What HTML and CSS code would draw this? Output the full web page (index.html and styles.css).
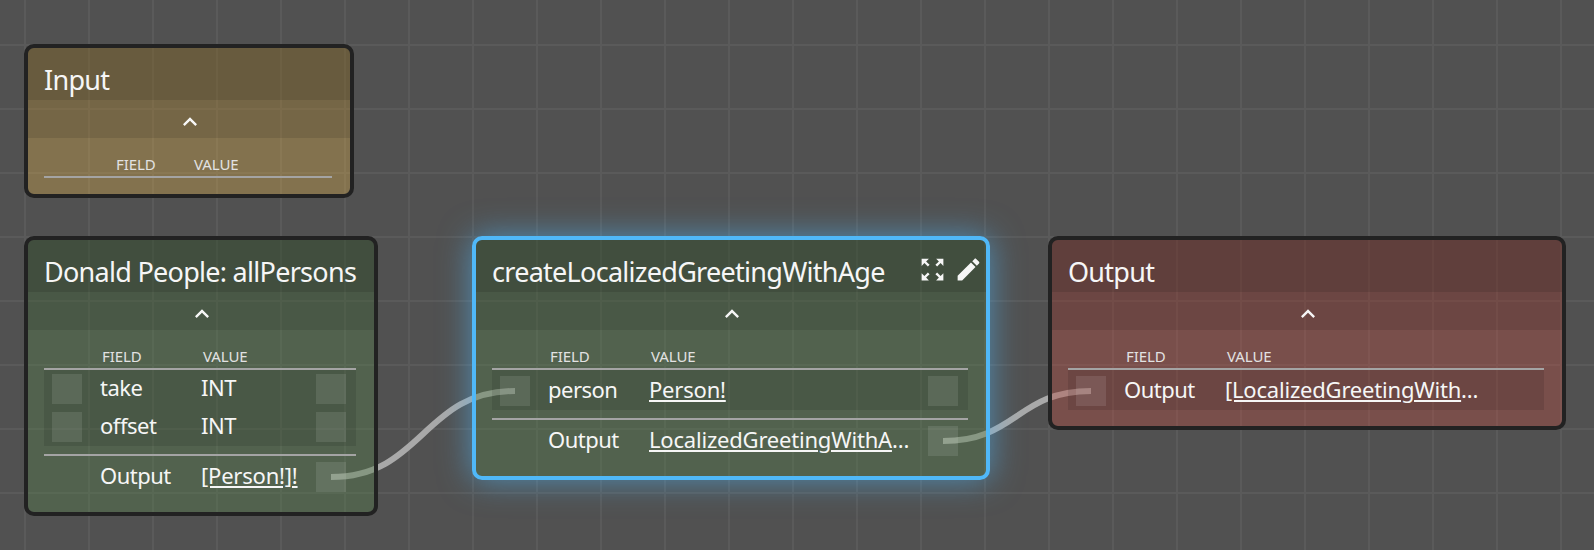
FILE: index.html
```html
<!DOCTYPE html>
<html lang="en">
<head>
<meta charset="utf-8">
<title>Graph</title>
<link rel="stylesheet" href="styles.css">
</head>
<body>
<main class="canvas">
  <svg class="wires" width="1594" height="550" viewBox="0 0 1594 550">
    <path class="wire" d="M331 477 C423 477 423 391 515 391"/>
    <path class="wire" d="M943 441 C1017 441 1017 391 1091 391"/>
  </svg>

  <section class="node node-input brown">
    <header class="node-head"><h2 class="node-title">Input</h2></header>
    <div class="collapse"><svg class="chev" viewBox="0 0 24 24"><path d="M12 8l-6 6 1.41 1.41L12 10.83l4.59 4.58L18 14z"/></svg></div>
    <div class="body">
      <div class="cols cols-narrow head"><span></span><span class="cap">FIELD</span><span class="cap">VALUE</span><span></span></div>
    </div>
  </section>

  <section class="node node-people green">
    <header class="node-head"><h2 class="node-title">Donald People: allPersons</h2></header>
    <div class="collapse"><svg class="chev" viewBox="0 0 24 24"><path d="M12 8l-6 6 1.41 1.41L12 10.83l4.59 4.58L18 14z"/></svg></div>
    <div class="body">
      <div class="cols head"><span></span><span class="cap">FIELD</span><span class="cap">VALUE</span><span></span></div>
      <div class="group group-multi">
        <div class="cols row"><span class="port"></span><span class="cell">take</span><span class="cell">INT</span><span class="port"></span></div>
        <div class="cols row"><span class="port"></span><span class="cell">offset</span><span class="cell">INT</span><span class="port"></span></div>
      </div>
      <div class="divider"></div>
      <div class="cols row single"><span></span><span class="cell">Output</span><a class="cell link">[Person!]!</a><span class="port"></span></div>
    </div>
  </section>

  <section class="node node-fn green selected">
    <header class="node-head">
      <h2 class="node-title">createLocalizedGreetingWithAge</h2>
      <div class="tools">
        <svg class="tool" viewBox="0 0 24 24"><path d="M15 3l2.3 2.3-2.89 2.87 1.42 1.42L18.7 6.7 21 9V3h-6zM3 9l2.3-2.3 2.87 2.89 1.42-1.42L6.7 5.3 9 3H3v6zm6 12l-2.3-2.3 2.89-2.87-1.42-1.42L5.3 17.3 3 15v6h6zm12-6l-2.3 2.3-2.87-2.89-1.42 1.42 2.89 2.87L15 21h6v-6z"/></svg>
        <svg class="tool" viewBox="0 0 24 24"><path d="M3 17.25V21h3.75L17.81 9.94l-3.75-3.75L3 17.25zM20.71 7.04c.39-.39.39-1.02 0-1.41l-2.34-2.34c-.39-.39-1.02-.39-1.41 0l-1.83 1.83 3.75 3.75 1.83-1.83z"/></svg>
      </div>
    </header>
    <div class="collapse"><svg class="chev" viewBox="0 0 24 24"><path d="M12 8l-6 6 1.41 1.41L12 10.83l4.59 4.58L18 14z"/></svg></div>
    <div class="body">
      <div class="cols head"><span></span><span class="cap">FIELD</span><span class="cap">VALUE</span><span></span></div>
      <div class="group">
        <div class="cols row single"><span class="port"></span><span class="cell">person</span><a class="cell link">Person!</a><span class="port"></span></div>
      </div>
      <div class="divider"></div>
      <div class="cols row single"><span></span><span class="cell">Output</span><a class="cell link">LocalizedGreetingWithAge!</a><span class="port"></span></div>
    </div>
  </section>

  <section class="node node-output red">
    <header class="node-head"><h2 class="node-title">Output</h2></header>
    <div class="collapse"><svg class="chev" viewBox="0 0 24 24"><path d="M12 8l-6 6 1.41 1.41L12 10.83l4.59 4.58L18 14z"/></svg></div>
    <div class="body">
      <div class="cols head"><span></span><span class="cap">FIELD</span><span class="cap">VALUE</span><span></span></div>
      <div class="group">
        <div class="cols row single"><span class="port"></span><span class="cell">Output</span><a class="cell link">[LocalizedGreetingWithAge!]!</a><span></span></div>
      </div>
    </div>
  </section>
</main>
</body>
</html>
```

FILE: styles.css
```css
* { box-sizing: border-box; }
html, body { margin: 0; height: 100%; background: #515151; overflow: hidden; }
body { font-family: "Noto Sans", "Open Sans", sans-serif; color: #f6f6f6; }

.canvas {
  position: relative;
  width: 1594px;
  height: 550px;
  overflow: hidden;
  background-color: #515151;
  background-image:
    linear-gradient(to right, #5a5a5a 2px, transparent 2px),
    linear-gradient(to bottom, #5a5a5a 2px, transparent 2px);
  background-size: 64px 64px;
  background-position: 24px 44px;
}

.wires { position: absolute; left: 0; top: 0; }
.wire { fill: none; stroke: #a9a9a9; stroke-width: 6; }

.node {
  position: absolute;
  display: flex;
  flex-direction: column;
  border: 4px solid #222;
  border-radius: 10px;
  overflow: hidden;
}
.brown { background: rgba(208, 166, 76, 0.4); }
.green { background: rgba(86, 126, 76, 0.4); }
.red { background: rgba(183, 78, 68, 0.4); }
.selected { border-color: #50b8f8; box-shadow: 0 0 32px rgba(80, 184, 248, 0.6); }

.node-input { left: 24px; top: 44px; width: 330px; height: 154px; }
.node-people { left: 24px; top: 236px; width: 354px; height: 280px; }
.node-fn { left: 472px; top: 236px; width: 518px; height: 244px; }
.node-output { left: 1048px; top: 236px; width: 518px; height: 194px; }

.node-head {
  height: 52px;
  flex: none;
  display: flex;
  align-items: center;
  justify-content: space-between;
  padding: 0 16px;
  background: rgba(0, 0, 0, 0.2);
}
.node-title {
  margin: 12px 0 0;
  font-size: 27px;
  font-weight: 400;
  line-height: 40px;
  letter-spacing: -0.72px;
  white-space: nowrap;
}
.tools { display: flex; gap: 7px; margin-right: -13px; margin-top: 6px; flex: none; }
.tool { width: 29px; height: 29px; fill: #f6f6f6; display: block; }

.collapse {
  height: 38px;
  flex: none;
  display: flex;
  align-items: center;
  justify-content: center;
  padding: 6px 0 0 2px;
  background: rgba(0, 0, 0, 0.1);
}
.chev { width: 28px; height: 28px; fill: #f6f6f6; display: block; }

.body { padding: 0 18px 16px 16px; }

.cols {
  display: grid;
  grid-template-columns: 48px 101px minmax(0, 1fr) 30px;
  padding: 0 10px 0 8px;
  align-items: center;
}
.cols-narrow { grid-template-columns: 64px 78px minmax(0, 1fr) 30px; }

.head {
  height: 40px;
  align-items: end;
  border-bottom: 2px solid #a4a4a4;
}
.cap {
  padding-left: 2px;
  font-size: 15px;
  line-height: 24px;
  color: #e2e2e2;
  letter-spacing: -0.1px;
  white-space: nowrap;
}
.cols-narrow .cap { padding-left: 0; }

.group { background: rgba(0, 0, 0, 0.1); }
.group-multi { padding: 4px 0; display: flex; flex-direction: column; gap: 8px; }
.row { height: 30px; }
.row.single { height: 40px; padding-top: 2px; }
.divider { height: 2px; margin-top: 8px; background: #a4a4a4; }

.port { display: block; width: 30px; height: 30px; background: rgba(255, 255, 255, 0.1); }
.cell {
  padding-bottom: 4px;
  font-size: 22px;
  line-height: 30px;
  letter-spacing: -0.5px;
  white-space: nowrap;
  overflow: hidden;
  text-overflow: ellipsis;
}
.link { text-decoration: underline; color: inherit; letter-spacing: -0.2px; margin-right: 10px; }
.node-output .link { margin-right: 18px; }
```
